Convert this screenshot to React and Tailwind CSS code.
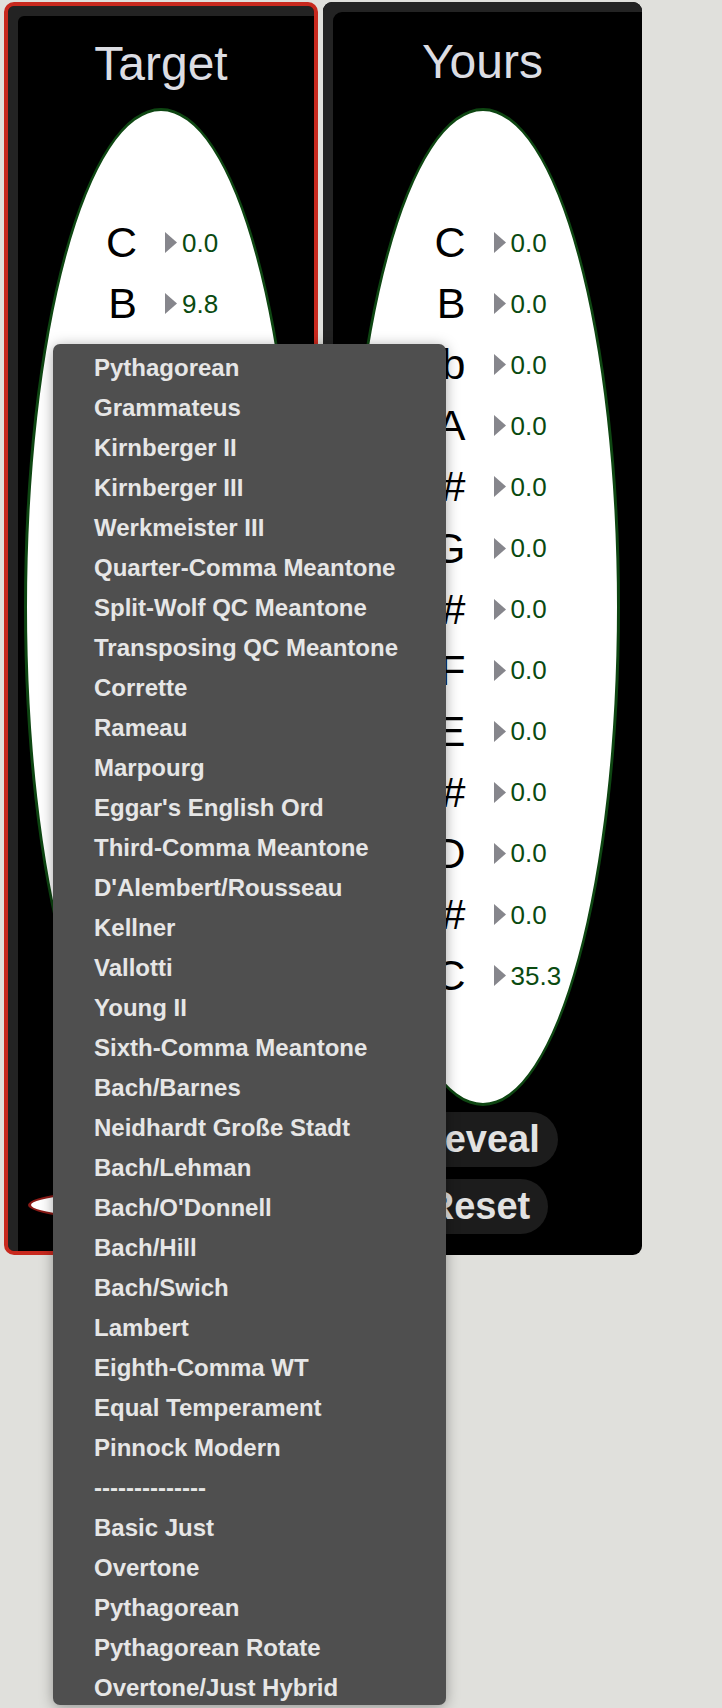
import React from "react";

const NOTES = ["C", "B", "Bb", "A", "G#", "G", "F#", "F", "E", "D#", "D", "C#", "C"];
const TARGET = ["0.0", "9.8", "5.9", "3.9", "7.8", "2.0", "11.7", "-2.0", "7.8", "3.9", "5.9", "9.8", "0.0"];
const YOURS = ["0.0", "0.0", "0.0", "0.0", "0.0", "0.0", "0.0", "0.0", "0.0", "0.0", "0.0", "0.0", "35.3"];

const TEMPERAMENTS = [
  "Pythagorean",
  "Grammateus",
  "Kirnberger II",
  "Kirnberger III",
  "Werkmeister III",
  "Quarter-Comma Meantone",
  "Split-Wolf QC Meantone",
  "Transposing QC Meantone",
  "Corrette",
  "Rameau",
  "Marpourg",
  "Eggar's English Ord",
  "Third-Comma Meantone",
  "D'Alembert/Rousseau",
  "Kellner",
  "Vallotti",
  "Young II",
  "Sixth-Comma Meantone",
  "Bach/Barnes",
  "Neidhardt Große Stadt",
  "Bach/Lehman",
  "Bach/O'Donnell",
  "Bach/Hill",
  "Bach/Swich",
  "Lambert",
  "Eighth-Comma WT",
  "Equal Temperament",
  "Pinnock Modern",
  "--------------",
  "Basic Just",
  "Overtone",
  "Pythagorean",
  "Pythagorean Rotate",
  "Overtone/Just Hybrid",
];

function Arrow() {
  return (
    <svg width="12" height="21" viewBox="0 0 12 21" className="shrink-0">
      <polygon points="0,0 12,10.5 0,21" fill="#86868c" />
    </svg>
  );
}

function Oval({ values, pad }) {
  return (
    <div className={`mx-auto w-[274px] h-[998px] rounded-[50%] bg-white border-[3px] border-[#0e4612] pt-[101px] ${pad}`}>
      {NOTES.map((n, i) => (
        <div key={i} className="flex items-center h-[61.1px]">
          <div className="w-[80px] text-right text-[43px] leading-[43px] text-black">{n}</div>
          <div className="ml-[28px] flex items-center gap-[5px]">
            <Arrow />
            <span className="text-[26px] leading-[26px] text-[#0a4a10]">{values[i]}</span>
          </div>
        </div>
      ))}
    </div>
  );
}

function Pill({ children, className = "" }) {
  return (
    <div className={`h-[55px] px-[18px] mr-[8px] rounded-full bg-[#1c1c1c] flex items-center text-[38px] font-bold text-[#e2e2e2] ${className}`}>
      {children}
    </div>
  );
}

export default function App() {
  return (
    <div
      className="relative min-h-[1708px] bg-[#e0e0dc] overflow-hidden"
      style={{ fontFamily: '"Liberation Sans", Arial, sans-serif' }}
    >
      <div className="flex items-stretch gap-[5px] pl-[4px] pt-[2px]">
        {/* target panel, selected */}
        <div className="w-[314px] rounded-[10px] border-[4px] border-[#c8291e] bg-black shadow-[inset_10px_10px_0_#232323]">
          <div className="h-[102px] pt-[34px] text-center text-[48px] leading-[48px] text-[#dcdde3]">Target</div>
          <Oval values={TARGET} pad="pl-[30px]" />
          <div className="mt-[82px] ml-[20px] w-[268px] h-[34px] rounded-[50%] bg-white border-[3px] border-[#8a1a16]" />
        </div>

        {/* your panel */}
        <div className="w-[319px] rounded-[9px] bg-black shadow-[inset_10px_10px_0_#232323] pb-[21px]">
          <div className="h-[106px] pt-[36px] text-center text-[48px] leading-[48px] text-[#dcdde3]">Yours</div>
          <Oval values={YOURS} pad="pl-[37px]" />
          <div className="flex flex-col items-center">
            <Pill className="mt-[6px]">Reveal</Pill>
            <Pill className="mt-[12px]">Reset</Pill>
          </div>
        </div>
      </div>

      {/* open temperament list */}
      <div className="absolute left-[53px] top-[344px] w-[393px] h-[1361px] overflow-hidden rounded-[7px] bg-[#4f4f4f] pt-[4px] pl-[41px] shadow-[0_2px_14px_rgba(0,0,0,0.35)]">
        {TEMPERAMENTS.map((t, i) => (
          <div key={i} className="text-[24px] leading-[40px] font-bold text-[#e6e6e6] whitespace-nowrap">
            {t}
          </div>
        ))}
      </div>
    </div>
  );
}
